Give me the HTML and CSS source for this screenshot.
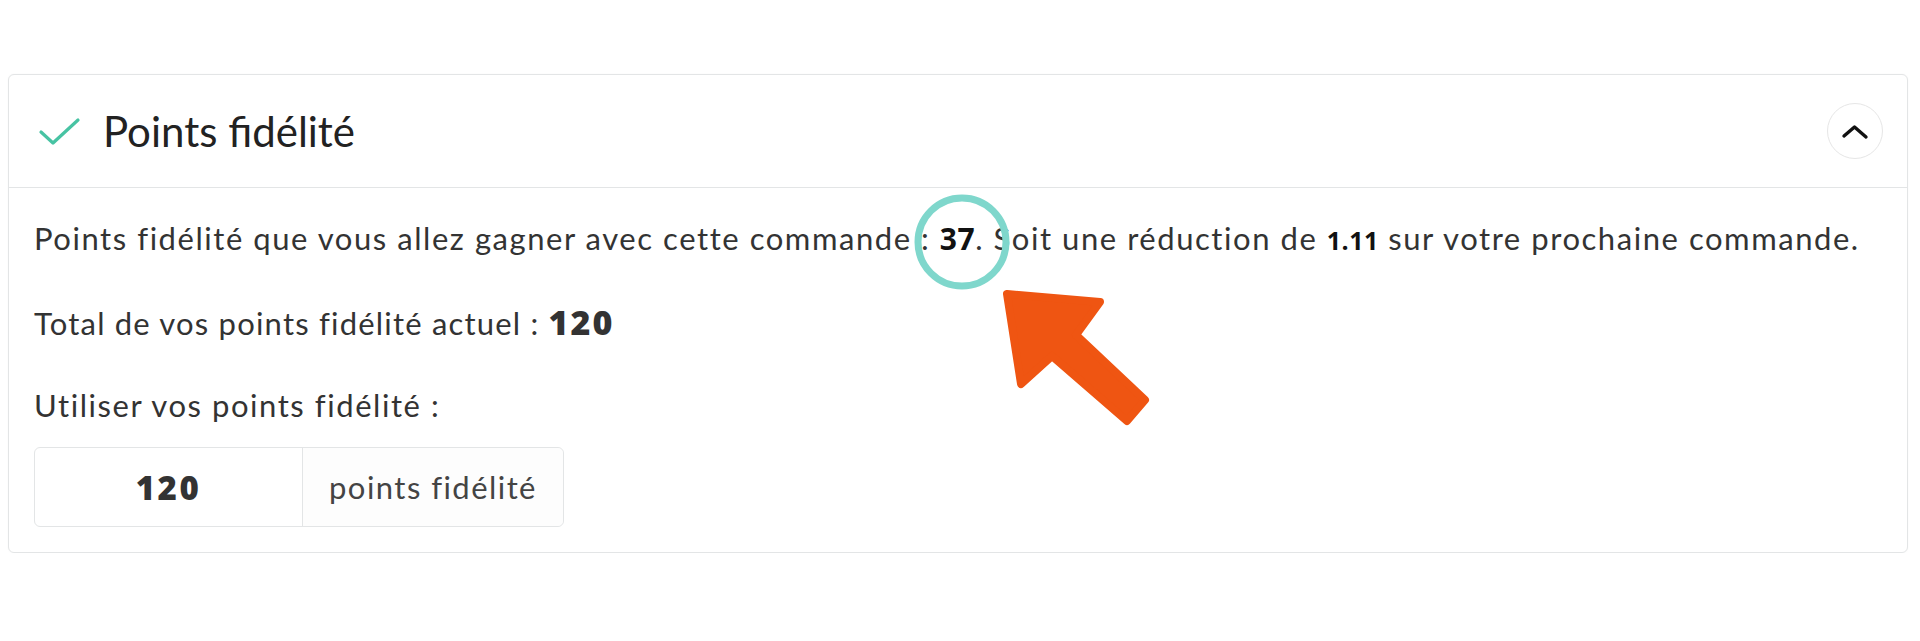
FILE: index.html
```html
<!DOCTYPE html>
<html lang="fr">
<head>
<meta charset="utf-8">
<title>Points fidélité</title>
<link rel="stylesheet" href="styles.css">
</head>
<body>
<div class="page">
  <section class="card">
    <header class="card-head">
      <svg class="check" width="44" height="32" viewBox="0 0 44 32" aria-hidden="true">
        <polyline points="3,16 15,27 40,4" fill="none" stroke="#47c3a3" stroke-width="3.2" stroke-linecap="round" stroke-linejoin="round"/>
      </svg>
      <h2 class="card-title">Points fidélité</h2>
      <button class="toggle" type="button" aria-label="Replier">
        <svg width="28" height="20" viewBox="0 0 28 20" aria-hidden="true">
          <polyline points="3,15 13.5,6 25,16" fill="none" stroke="#111" stroke-width="3.4" stroke-linecap="round" stroke-linejoin="round"/>
        </svg>
      </button>
    </header>
    <div class="card-body">
      <p class="line">Points fidélité que vous allez gagner avec cette commande : <b class="num">37</b>. Soit une réduction de <b class="num small">1.11</b> sur votre prochaine commande.</p>
      <p class="line">Total de vos points fidélité actuel : <b class="num big">120</b></p>
      <p class="line">Utiliser vos points fidélité :</p>
      <div class="input-group">
        <div class="input-value">120</div>
        <div class="input-addon">points fidélité</div>
      </div>
    </div>
  </section>
</div>
<svg class="annotation" width="1920" height="641" viewBox="0 0 1920 641" aria-hidden="true">
  <circle cx="962" cy="242" r="44" fill="none" stroke="#7fd7cc" stroke-width="7"/>
  <polygon points="1007,294 1100,302 1076,335 1145,400 1127,421 1052,356 1021,384" fill="#ef5512" stroke="#ef5512" stroke-width="8" stroke-linejoin="round"/>
</svg>
</body>
</html>
```

FILE: styles.css
```css
html, body {
  margin: 0;
  padding: 0;
  background: #ffffff;
}

body {
  font-family: "Lato", "Liberation Sans", sans-serif;
  color: #333333;
}

.page {
  padding: 74px 12px 0 8px;
}

.card {
  border: 1px solid #e3e5e6;
  border-radius: 6px;
  box-shadow: 0 0 2px rgba(0, 0, 0, 0.04);
  background: #ffffff;
}

.card-head {
  height: 112px;
  display: flex;
  align-items: center;
  padding: 0 24px 0 29px;
  border-bottom: 1px solid #e3e5e6;
}

.check {
  flex: none;
  margin-top: 2px;
}

.card-title {
  flex: 1;
  margin: 0 0 0 21px;
  font-size: 42px;
  font-weight: 400;
  color: #222222;
}

.toggle {
  flex: none;
  width: 56px;
  height: 56px;
  border-radius: 50%;
  border: 1px solid #e6e6e6;
  background: #ffffff;
  display: flex;
  align-items: center;
  justify-content: center;
  padding: 0;
}

.card-body {
  padding: 28px 25px 25px 25px;
}

.line {
  margin: 0 0 37px 0;
  font-size: 31px;
  line-height: 45px;
  letter-spacing: 1.55px;
  color: #333333;
}

.line:nth-child(2) {
  letter-spacing: 1.2px;
}

.line:nth-child(3) {
  margin-bottom: 19px;
}

.num {
  font-family: "Open Sans", "Liberation Sans", sans-serif;
  font-weight: 700;
  font-size: 30px;
  letter-spacing: 0.5px;
  color: #111111;
}

.num.small {
  font-size: 25px;
}

.num.big {
  font-size: 34px;
  font-weight: 800;
  letter-spacing: 2px;
  color: #333333;
}

.input-group {
  display: flex;
  width: 530px;
  height: 80px;
  border: 1px solid #e3e5e6;
  border-radius: 6px;
  box-sizing: border-box;
}

.input-value {
  width: 267px;
  display: flex;
  align-items: center;
  justify-content: center;
  font-family: "Open Sans", "Liberation Sans", sans-serif;
  font-weight: 800;
  font-size: 33px;
  letter-spacing: 2.5px;
  color: #333333;
  border-right: 1px solid #e3e5e6;
}

.input-addon {
  flex: 1;
  display: flex;
  align-items: center;
  justify-content: center;
  font-size: 31px;
  letter-spacing: 1.45px;
  color: #444444;
  background: #fdfdfd;
  border-radius: 0 6px 6px 0;
}

.annotation {
  position: absolute;
  left: 0;
  top: 0;
  pointer-events: none;
}
```
